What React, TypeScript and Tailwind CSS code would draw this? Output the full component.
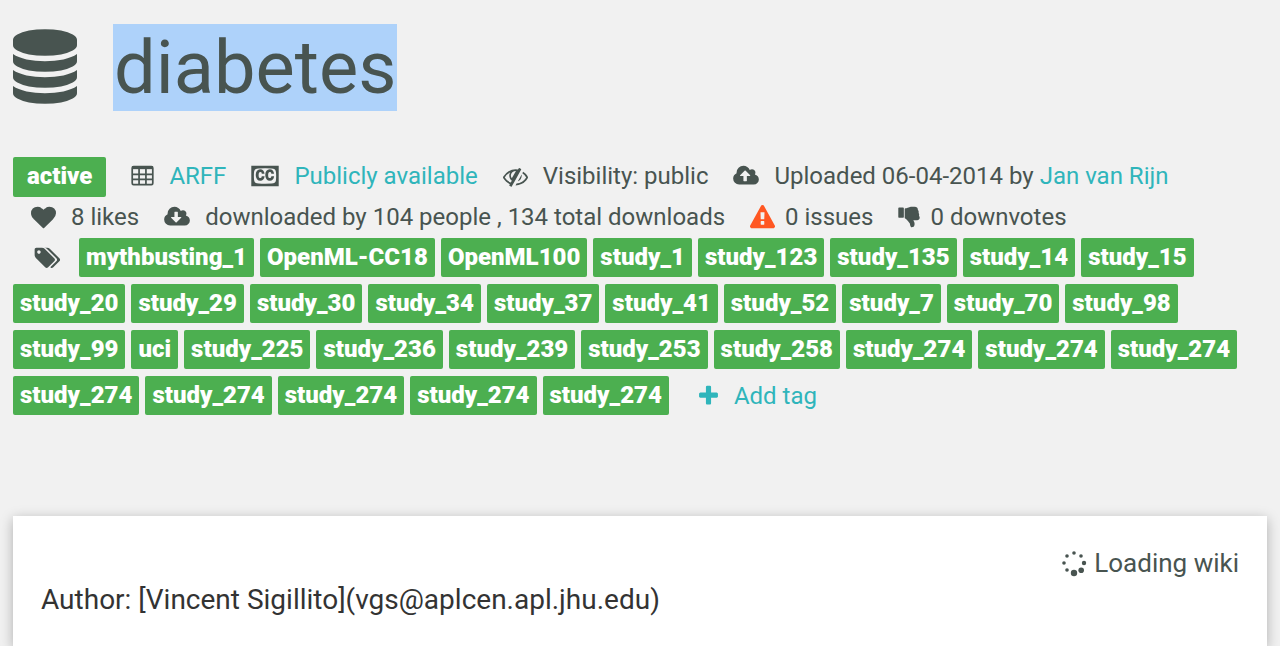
import type { ReactNode } from "react";

type IconProps = { box: string; d: string; className: string };

function Icon({ box, d, className }: IconProps) {
  return (
    <svg viewBox={box} className={className} fill="currentColor" aria-hidden="true">
      <path d={d} />
    </svg>
  );
}

const CLOUD =
  "m640 224q0 159-112.5 271.5t-271.5 112.5h-1088q-185 0-316.5-131.5t-131.5-316.5q0-130 70-240t188-165q-2-30-2-43 0-212 150-362t362-150q156 0 285.5 87t188.5 231q71-62 166-62 106 0 181 75t75 181q0 76-41 138 130 31 213.5 135.5t83.5 238.5z";

const PATHS = {
  database:
    "M896 768q237 0 443-43t325-127v170q0 69-103 128t-280 93.5-385 34.5-385-34.5-280-93.5-103-128v-170q119 84 325 127t443 43zm0 768q237 0 443-43t325-127v170q0 69-103 128t-280 93.5-385 34.5-385-34.5-280-93.5-103-128v-170q119 84 325 127t443 43zm0-384q237 0 443-43t325-127v170q0 69-103 128t-280 93.5-385 34.5-385-34.5-280-93.5-103-128v-170q119 84 325 127t443 43zm0-1152q208 0 385 34.5t280 93.5 103 128v128q0 69-103 128t-280 93.5-385 34.5-385-34.5-280-93.5-103-128v-128q0-69 103-128t280-93.5 385-34.5z",
  heart:
    "M896 1664q-26 0-44-18l-624-602q-10-8-27.5-26t-55.5-65.5-68-97.5-53.5-121-23.5-138q0-220 127-344t351-124q62 0 126.5 21.5t120 58 95.5 68.5 76 68q36-36 76-68t95.5-68.5 120-58 126.5-21.5q224 0 351 124t127 344q0 221-229 450l-623 600q-18 18-44 18z",
  download:
    "M1280 928q0-14-9-23t-23-9h-224v-352q0-13-9.5-22.5t-22.5-9.5h-192q-13 0-22.5 9.5t-9.5 22.5v352h-224q-13 0-22.5 9.5t-9.5 22.5q0 14 9 23l352 352q9 9 23 9t23-9l351-351q10-12 10-24z" +
    CLOUD,
  upload:
    "M1280 864q0-14-9-23l-352-352q-9-9-23-9t-23 9l-351 351q-10 12-10 24 0 14 9 23t23 9h224v352q0 13 9.5 22.5t22.5 9.5h192q13 0 22.5-9.5t9.5-22.5v-352h224q13 0 22.5-9.5t9.5-22.5z" +
    CLOUD.replace("m640 224", "m640 288"),
  tags: "M448 448q0-53-37.5-90.5t-90.5-37.5-90.5 37.5-37.5 90.5 37.5 90.5 90.5 37.5 90.5-37.5 37.5-90.5zm1067 576q0 53-37 90l-491 492q-39 37-91 37-53 0-90-37l-715-716q-38-37-64.5-101t-26.5-117v-416q0-52 38-90t90-38h416q53 0 117 26.5t102 64.5l715 714q37 39 37 91zm384 0q0 53-37 90l-491 492q-39 37-91 37-36 0-59-14t-53-45l470-470q37-37 37-90 0-52-37-91l-715-714q-38-38-102-64.5t-117-26.5h224q53 0 117 26.5t102 64.5l715 714q37 39 37 91z",
  warning:
    "M1024 1375v-190q0-14-9.5-23.5t-22.5-9.5h-192q-13 0-22.5 9.5t-9.5 23.5v190q0 14 9.5 23.5t22.5 9.5h192q13 0 22.5-9.5t9.5-23.5zm-2-374l18-459q0-12-10-19-13-11-24-11h-220q-11 0-24 11-10 7-10 21l17 457q0 10 10 16.5t24 6.5h185q14 0 23.5-6.5t10.5-16.5zm-14-934l768 1408q35 63-2 126-17 29-46.5 46t-63.5 17h-1536q-34 0-63.5-17t-46.5-46q-37-63-2-126l768-1408q17-31 47-49t65-18 65 18 47 49z",
  thumbsDown:
    "M320 256q0 26-19 45t-45 19-45-19-19-45 19-45 45-19 45 19 19 45zm160-192v640q0 26-19 45t-45 19h-288q-26 0-45-19t-19-45v-640q0-26 19-45t45-19h288q26 0 45 19t19 45zm1129 549q55 61 55 149-1 78-57.5 135t-134.5 57h-277q4 14 8 24t11 22 10 18q18 37 27 57t19 58.5 10 76.5q0 24-.5 39t-5 45-12 50-24 45-40 40-60 26-82.5 10.5q-26 0-45-19-20-20-34-50t-19.5-52-12.5-61q-9-42-13.5-60.5t-17.5-48.5-31-48q-33-33-101-120-49-64-101-121t-76-59q-25-2-43-20.5t-18-43.5v-641q0-26 19-44.5t45-19.5q35-1 158-44 77-26 120.5-39.5t121.5-29 144-15.5h129q133 2 197 78 58 69 49 181 39 37 54 94 17 61 0 117 46 61 43 137 0 32-15 76z",
  eyeSlash:
    "M930 500q-150 0-258 95t-108 230q0 100 66 190l290-500zM555 1335l78-141q-87-63-136-159t-49-203q0-121 61-225-229 117-381 353 167 258 427 375zm752-950q0 7-1 9-106 189-316 567t-315 566l-49 89q-10 16-28 16-12 0-134-70-16-10-16-28 0-12 44-87-143-65-263.5-173t-208.5-245q-20-31-20-69t20-69q153-235 380-371t496-136q89 0 180 17l54-97q10-16 28-16 5 0 18 6t31 15.5 33 18.5 31.5 18.5 19.5 11.5q16 10 16 27zm37 447q0 139-79 253.5t-209 164.5l280-502q8 45 8 84zm448 128q0 35-20 69-39 64-109 145-150 172-347.5 267t-419.5 95l74-132q212-18 392.5-137t301.5-307q-115-179-282-294l63-112q95 64 182.5 153t144.5 184q20 34 20 69z",
  cc: "M785 911h207q-14 158-98.5 248.5t-214.5 90.5q-162 0-254.5-116t-92.5-316q0-194 93-311.5t233-117.5q148 0 232 87t97 247h-203q-5-64-35.5-99t-81.5-35q-57 0-88.5 60.5t-31.5 177.5q0 48 5 84t18 69.5 40 51.5 66 18q95 0 109-139zm712 0h206q-14 158-98 248.5t-214 90.5q-162 0-254.5-116t-92.5-316q0-194 93-311.5t233-117.5q148 0 232 87t97 247h-204q-4-64-35-99t-81-35q-57 0-88.5 60.5t-31.5 177.5q0 48 5 84t18 69.5 39.5 51.5 65.5 18q49 0 76.5-38t33.5-101zm359-15q0-207-15.500-307t-60.500-161q-6-8-13.500-14t-21.500-15-16-11q-86-63-697-63-625 0-710 63-5 4-17.500 11.500t-21 14-14.500 14.500q-45 60-60 159.500t-15 308.500q0 208 15 307.500t60 160.500q6 8 15 15t20.500 14 17.500 12q44 33 239.500 49t470.500 16q610 0 697-65 5-4 17-11t20.500-14 13.500-16q46-60 61-159t15-309zm192-768v1536h-2048v-1536h2048z",
  plus: "M1600 736v192q0 40-28 68t-68 28h-416v416q0 40-28 68t-68 28h-192q-40 0-68-28t-28-68v-416h-416q-40 0-68-28t-28-68v-192q0-40 28-68t68-28h416v-416q0-40 28-68t68-28h192q40 0 68 28t28 68v416h416q40 0 68 28t28 68z",
};

function TableIcon() {
  return (
    <svg viewBox="0 0 1664 1792" className="h-6 w-[23px]" aria-hidden="true">
      <rect x="64" y="192" width="1536" height="1344" rx="100" fill="none" stroke="currentColor" strokeWidth="128" />
      <rect x="64" y="160" width="1536" height="224" fill="currentColor" />
      <path d="M576 320v1216M1088 320v1216M64 768h1536M64 1152h1536" stroke="currentColor" strokeWidth="128" />
    </svg>
  );
}

function Spinner() {
  const dots = [
    [13, 3, 1.8],
    [20, 6, 1.8],
    [23, 13, 2.2],
    [20.2, 20.2, 2.8],
    [13, 23, 3.2],
    [6, 20, 1.8],
    [3, 13, 1.8],
    [6, 6, 1.8],
  ];
  return (
    <svg viewBox="0 0 26 27" className="h-[27px] w-[26px]" fill="currentColor" aria-hidden="true">
      {dots.map(([x, y, r]) => (
        <circle key={`${x}-${y}`} cx={x} cy={y} r={r} />
      ))}
    </svg>
  );
}

function Meta({ icon, tight, children }: { icon: ReactNode; tight?: boolean; children: ReactNode }) {
  return (
    <li className={tight ? "flex items-center gap-[10px]" : "flex items-center gap-[15px]"}>
      {icon}
      <span>{children}</span>
    </li>
  );
}

function Link({ children }: { children: ReactNode }) {
  return (
    <a href="#" className="text-[#2fb5bb]">
      {children}
    </a>
  );
}

const TAGS = [
  "mythbusting_1", "OpenML-CC18", "OpenML100", "study_1", "study_123", "study_135", "study_14", "study_15",
  "study_20", "study_29", "study_30", "study_34", "study_37", "study_41", "study_52", "study_7", "study_70",
  "study_98", "study_99", "uci", "study_225", "study_236", "study_239", "study_253", "study_258", "study_274",
  "study_274", "study_274", "study_274", "study_274", "study_274", "study_274", "study_274",
];

export default function App() {
  return (
    <main className="min-h-screen bg-[#f1f1f1] px-[13px] pt-6 font-['Roboto',sans-serif] text-2xl text-[#485450]">
      <header className="flex items-start gap-9">
        <Icon box="128 0 1536 1792" d={PATHS.database} className="mt-[5px] h-[75px] w-16" />
        <h1 className="bg-[#aed2fa] px-px text-[74px] leading-[87px]">diabetes</h1>
      </header>

      <ul className="mt-[46px] flex flex-wrap items-start gap-x-[25px] leading-[38px]">
        <li className="rounded-xs bg-[#4caf50] px-[14px] pb-0.5 font-black text-white">active</li>
        <Meta icon={<TableIcon />}>
          <Link>ARFF</Link>
        </Meta>
        <Meta icon={<Icon box="0 0 2048 1792" d={PATHS.cc} className="h-6 w-7" />}>
          <Link>Publicly available</Link>
        </Meta>
        <Meta icon={<Icon box="0 0 1792 1792" d={PATHS.eyeSlash} className="size-[25px]" />}>Visibility: public</Meta>
        <Meta icon={<Icon box="0 0 1920 1792" d={PATHS.upload} className="h-6 w-[26px]" />}>
          Uploaded 06-04-2014 by <Link>Jan van Rijn</Link>
        </Meta>
      </ul>

      <ul className="flex flex-wrap items-center gap-x-[25px] pl-[18px] leading-10">
        <Meta icon={<Icon box="0 0 1792 1792" d={PATHS.heart} className="size-[25px]" />}>8 likes</Meta>
        <Meta icon={<Icon box="0 0 1920 1792" d={PATHS.download} className="h-6 w-[26px]" />}>
          downloaded by 104 people , 134 total downloads
        </Meta>
        <Meta tight icon={<Icon box="0 0 1792 1792" d={PATHS.warning} className="size-[25px] text-[#ff5722]" />}>
          0 issues
        </Meta>
        <Meta tight icon={<Icon box="64 -192 1600 1792" d={PATHS.thumbsDown} className="h-6 w-[22px]" />}>
          0 downvotes
        </Meta>
      </ul>

      <ul className="flex flex-wrap items-center gap-x-[6px] gap-y-[7px] pt-px">
        <li className="ml-[21px] mr-3">
          <Icon box="0 0 1920 1792" d={PATHS.tags} className="h-6 w-[27px]" />
        </li>
        {TAGS.map((tag, i) => (
          <li key={i} className="rounded-xs bg-[#4caf50] px-[7px] font-black leading-[39px] text-white">
            {tag}
          </li>
        ))}
        <li className="ml-6">
          <a href="#" className="flex items-center gap-4 text-[#2fb5bb]">
            <Icon box="192 0 1408 1792" d={PATHS.plus} className="h-6 w-[19px]" />
            Add tag
          </a>
        </li>
      </ul>

      <section className="mt-[101px] min-h-[130px] bg-white px-7 pb-7 pt-7 shadow-[0_3px_12px_rgba(0,0,0,0.28)]">
        <div className="flex items-center justify-end gap-[7px] text-[26px] leading-[38px]">
          <Spinner />
          <span>Loading wiki</span>
        </div>
        <p className="text-[28px] leading-9 text-[#333333]">Author: [Vincent Sigillito](vgs@aplcen.apl.jhu.edu)</p>
      </section>
    </main>
  );
}
